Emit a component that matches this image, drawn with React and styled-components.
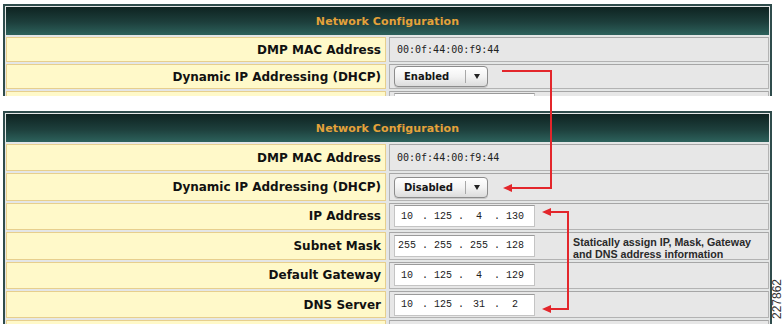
import { styled, createGlobalStyle } from "styled-components";

const GlobalStyle = createGlobalStyle`
  html, body {
    margin: 0;
    padding: 0;
    background: #ffffff;
    overflow: hidden;
    font-family: "DejaVu Sans", Verdana, sans-serif;
  }
`;

// the third row of the upper panel is cut off in the shot, only its top edge shows
const topRows = [
  { label: "DMP MAC Address", type: "text", value: "00:0f:44:00:f9:44" },
  { label: "Dynamic IP Addressing (DHCP)", type: "select", value: "Enabled" },
  { label: "", type: "ip", value: [] },
];

const bottomRows = [
  { label: "DMP MAC Address", type: "text", value: "00:0f:44:00:f9:44" },
  { label: "Dynamic IP Addressing (DHCP)", type: "select", value: "Disabled" },
  { label: "IP Address", type: "ip", value: [10, 125, 4, 130] },
  { label: "Subnet Mask", type: "ip", value: [255, 255, 255, 128] },
  { label: "Default Gateway", type: "ip", value: [10, 125, 4, 129] },
  { label: "DNS Server", type: "ip", value: [10, 125, 31, 2] },
  { label: "", type: "text", value: "" },
];

const IpField = ({ octets }) => (
  <StyledIpBox>
    {octets.map((o, i) => (
      <span key={i}>
        <StyledOctet>{o}</StyledOctet>
        {i < 3 && <StyledOctet>.</StyledOctet>}
      </span>
    ))}
  </StyledIpBox>
);

const Select = ({ value }) => (
  <StyledSelect>
    <StyledSelectText>{value}</StyledSelectText>
    <StyledDivider />
    <StyledCaret />
  </StyledSelect>
);

const Panel = ({ rows, rowHeight, clip }) => (
  <StyledPanel $clip={clip}>
    <StyledGrid $rowHeight={rowHeight}>
      <StyledHeader>Network Configuration</StyledHeader>
      {rows.map((row, i) => (
        <StyledRowPair key={i}>
          <StyledLabel>{row.label}</StyledLabel>
          <StyledValue>
            {row.type === "text" && <StyledMac>{row.value}</StyledMac>}
            {row.type === "select" && <Select value={row.value} />}
            {row.type === "ip" && <IpField octets={row.value} />}
          </StyledValue>
        </StyledRowPair>
      ))}
    </StyledGrid>
  </StyledPanel>
);

const Arrow = ({ points, tips }) => (
  <>
    <polyline
      points={points}
      fill="none"
      stroke="#e3262b"
      strokeWidth="2"
    />
    {tips.map(([x, y], i) => (
      <polygon
        key={i}
        points={`${x},${y} ${x + 9},${y - 4} ${x + 9},${y + 4}`}
        fill="#e3262b"
      />
    ))}
  </>
);

const App = () => {
  return (
    <>
      <GlobalStyle />
      <StyledPage>
        <Panel rows={topRows} rowHeight="25px" clip={92} />
        <Panel rows={bottomRows} rowHeight="27.4px" />

        <StyledOverlay width="784" height="324" viewBox="0 0 784 324">
          <Arrow
            points="502,71 551,71 551,188 510,188"
            tips={[[503, 188]]}
          />
          <Arrow
            points="550,212 568,212 568,309 550,309"
            tips={[
              [542, 212],
              [542, 309],
            ]}
          />
        </StyledOverlay>

        <StyledNote>
          Statically assign IP, Mask, Gateway
          <br />
          and DNS address information
        </StyledNote>
        <StyledFigureId>227862</StyledFigureId>
      </StyledPage>
    </>
  );
};

const StyledPage = styled.div`
  position: relative;
  width: 784px;
  height: 324px;
  overflow: hidden;
  box-sizing: border-box;
  padding: 4px 0 0 3px;
  display: flex;
  flex-direction: column;
  gap: 15px;
`;

const StyledPanel = styled.div`
  width: 769px;
  box-sizing: border-box;
  border: 2px solid #2f4c4c;
  border-bottom: ${(p) => (p.$clip ? "none" : "2px solid #2f4c4c")};
  background: #e4e6e6;
  padding: 1px;
  height: ${(p) => (p.$clip ? `${p.$clip}px` : "auto")};
  overflow: hidden;
  flex-shrink: 0;
`;

const StyledGrid = styled.div`
  display: grid;
  grid-template-columns: 380px 1fr;
  grid-auto-rows: ${(p) => p.$rowHeight};
  grid-template-rows: 28px;
  column-gap: 3px;
  row-gap: 2px;
`;

const StyledRowPair = styled.div`
  display: contents;
`;

const StyledHeader = styled.div`
  grid-column: 1 / -1;
  display: flex;
  align-items: center;
  justify-content: center;
  background: linear-gradient(#0e2321, #1d3f3c 55%, #2d625c);
  color: #e5a23a;
  font-size: 11px;
  font-weight: bold;
  letter-spacing: 0.1px;
`;

const StyledLabel = styled.div`
  display: flex;
  align-items: center;
  justify-content: flex-end;
  box-sizing: border-box;
  padding-right: 4px;
  background: #fff9c9;
  border: 1px solid #e7cf8d;
  color: #111;
  font-size: 12px;
  font-weight: bold;
`;

const StyledValue = styled.div`
  display: flex;
  align-items: center;
  box-sizing: border-box;
  padding-left: 4px;
  background: #e7e7e7;
  border: 1px solid #b3b3b3;
  border-top-color: #a6a6a6;
`;

const StyledMac = styled.span`
  margin-left: 3px;
  font-family: "DejaVu Sans Mono", monospace;
  font-size: 10px;
  color: #222;
`;

const StyledSelect = styled.div`
  display: flex;
  align-items: center;
  box-sizing: border-box;
  width: 94px;
  height: 21px;
  border: 1px solid #8c8c8c;
  border-radius: 4px;
  background: linear-gradient(#ffffff, #f3f3f3 50%, #dcdcdc);
  box-shadow: 0 1px 0 #c8c8c8;
`;

const StyledSelectText = styled.span`
  flex: 1;
  padding-left: 9px;
  font-size: 10px;
  font-weight: bold;
  color: #151515;
`;

const StyledDivider = styled.span`
  width: 1px;
  height: 13px;
  background: #a8a8a8;
`;

const StyledCaret = styled.span`
  width: 21px;
  display: flex;
  justify-content: center;

  &::after {
    content: "";
    border-left: 3.5px solid transparent;
    border-right: 3.5px solid transparent;
    border-top: 5px solid #222;
  }
`;

const StyledIpBox = styled.div`
  display: flex;
  align-items: center;
  box-sizing: border-box;
  width: 141px;
  height: 22px;
  padding-left: 3px;
  background: #ffffff;
  border: 1px solid #c4c4c4;
  border-top-color: #9a9a9a;
  font-family: "Liberation Mono", "Courier New", monospace;
  font-size: 10px;
  color: #222;
`;

const StyledOctet = styled.span`
  display: inline-block;
  width: 18px;
  text-align: center;
`;

const StyledOverlay = styled.svg`
  position: absolute;
  left: 0;
  top: 0;
  pointer-events: none;
`;

const StyledNote = styled.div`
  position: absolute;
  left: 573px;
  top: 236px;
  font-family: "Liberation Sans", Arial, sans-serif;
  font-size: 10.7px;
  font-weight: bold;
  line-height: 12px;
  color: #2a2a2a;
`;

const StyledFigureId = styled.div`
  position: absolute;
  left: 771px;
  top: 279px;
  writing-mode: vertical-rl;
  transform: rotate(180deg);
  font-family: "Liberation Sans", Arial, sans-serif;
  font-size: 12px;
  line-height: 12px;
  color: #333;
`;

export default App;
